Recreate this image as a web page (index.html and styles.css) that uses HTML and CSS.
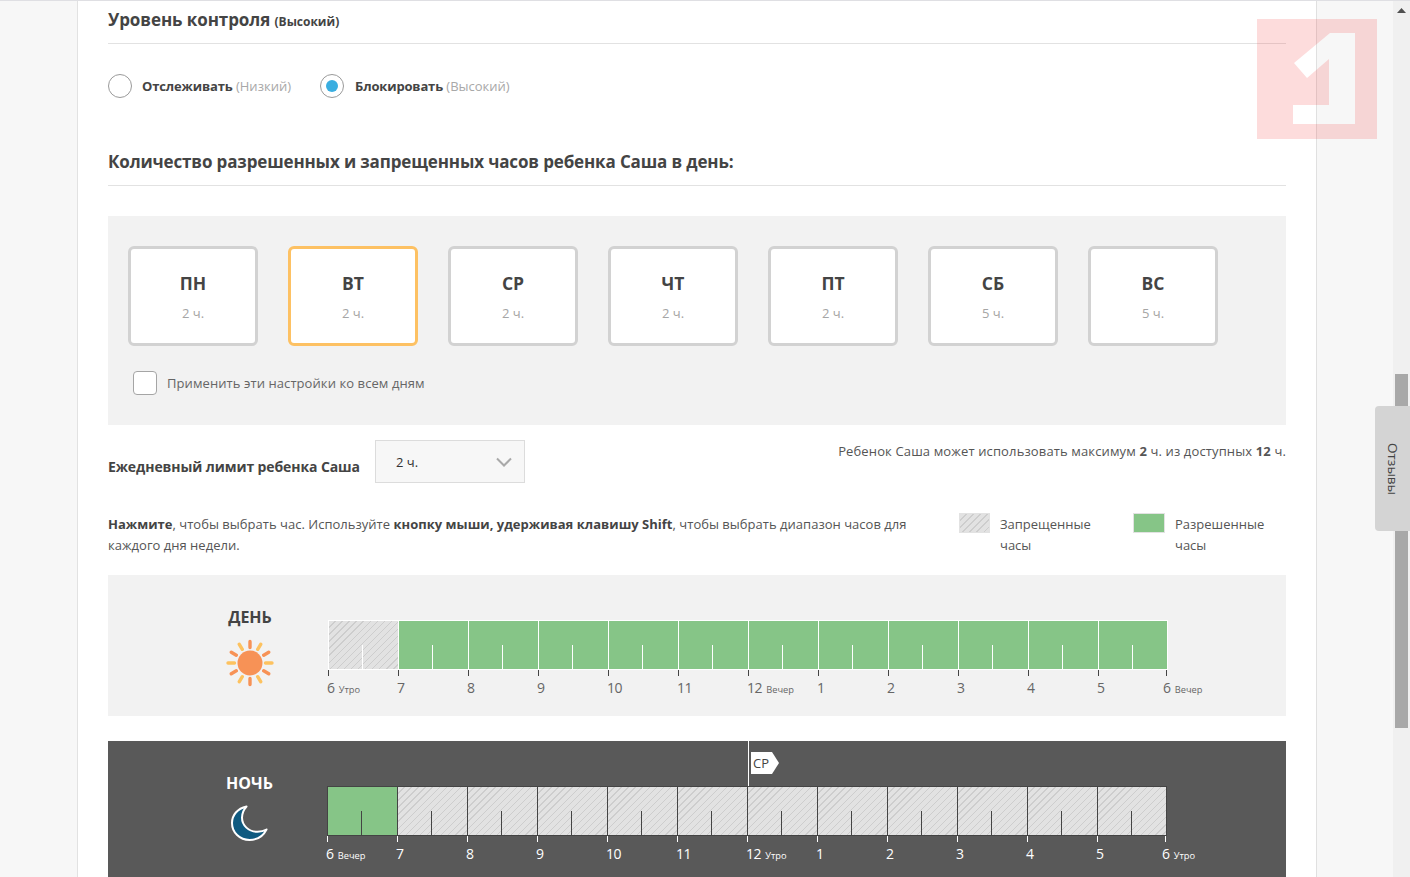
FILE: index.html
```html
<!DOCTYPE html>
<html lang="ru">
<head>
<meta charset="utf-8">
<title>Уровень контроля</title>
<link rel="stylesheet" href="styles.css">
</head>
<body>
<div class="page">
  <div class="gutter-left"></div>
  <main class="main">
    <h2 class="title title-first">Уровень контроля <small>(Высокий)</small></h2>
    <div class="radios">
      <label class="radio"><span class="radio-dot"></span><span><b>Отслеживать</b> <i>(Низкий)</i></span></label>
      <label class="radio"><span class="radio-dot on"></span><span><b>Блокировать</b> <i>(Высокий)</i></span></label>
    </div>
    <h2 class="title title-second">Количество разрешенных и запрещенных часов ребенка Саша в день:</h2>

    <section class="days-panel">
      <div class="days">
        <div class="day"><strong>ПН</strong><span>2 ч.</span></div>
        <div class="day active"><strong>ВТ</strong><span>2 ч.</span></div>
        <div class="day"><strong>СР</strong><span>2 ч.</span></div>
        <div class="day"><strong>ЧТ</strong><span>2 ч.</span></div>
        <div class="day"><strong>ПТ</strong><span>2 ч.</span></div>
        <div class="day"><strong>СБ</strong><span>5 ч.</span></div>
        <div class="day"><strong>ВС</strong><span>5 ч.</span></div>
      </div>
      <label class="apply"><span class="check"></span>Применить эти настройки ко всем дням</label>
    </section>

    <div class="limit">
      <b class="limit-label">Ежедневный лимит ребенка Саша</b>
      <div class="select">2 ч.
        <svg class="chev" width="16" height="10" viewBox="0 0 16 10"><path d="M1 1.5l7 7 7-7" fill="none" stroke="#a9a9a9" stroke-width="2"/></svg>
      </div>
      <p class="limit-note">Ребенок Саша может использовать максимум <b>2</b> ч. из доступных <b>12</b> ч.</p>
    </div>

    <div class="help">
      <p class="help-text"><b>Нажмите</b>, чтобы выбрать час. Используйте <b>кнопку мыши, удерживая клавишу Shift</b>, чтобы выбрать диапазон часов для каждого дня недели.</p>
      <div class="legend legend-a"><span class="swatch hatch"></span><span class="legend-text">Запрещенные часы</span></div>
      <div class="legend legend-b"><span class="swatch green"></span><span class="legend-text">Разрешенные часы</span></div>
    </div>

    <section class="sched sched-day">
      <div class="sched-side">
        <div class="sched-name">ДЕНЬ</div>
        <svg class="sun" width="48" height="48" viewBox="0 0 48 48">
          <circle cx="24" cy="24" r="12.5" fill="#f79256"/>
          <g stroke-width="3.4" stroke-linecap="round" fill="none">
            <path d="M24 2.500v6M24 39.500v6M5.300 13.200l5 3M37.700 31.800l5 3M42.700 13.200l-5 3M10.300 31.800l-5 3" stroke="#f79256"/>
            <path d="M13.300 5.300l3 5M31.700 37.700l3 5M34.700 5.300l-3 5M16.300 37.700l-3 5M2 24h6.500M39.500 24H46" stroke="#fdc25f"/>
          </g>
        </svg>
      </div>
      <div class="timeline">
        <div class="bar">
          <div class="cell off"></div><div class="cell on"></div><div class="cell on"></div><div class="cell on"></div><div class="cell on"></div><div class="cell on"></div><div class="cell on"></div><div class="cell on"></div><div class="cell on"></div><div class="cell on"></div><div class="cell on"></div><div class="cell on"></div>
        </div>
        <div class="hours">
          <div class="hour">6 <small>Утро</small></div><div class="hour">7</div><div class="hour">8</div><div class="hour">9</div><div class="hour">10</div><div class="hour">11</div><div class="hour">12 <small>Вечер</small></div><div class="hour">1</div><div class="hour">2</div><div class="hour">3</div><div class="hour">4</div><div class="hour">5</div><div class="hour last">6 <small>Вечер</small></div>
        </div>
      </div>
    </section>

    <section class="sched sched-night">
      <div class="sched-side">
        <div class="sched-name">НОЧЬ</div>
        <svg class="moon" width="40" height="38" viewBox="0 0 40 38">
          <path d="M16.500 2.500C7.500 4.500 2 11 2 19c0 9.500 7.700 17 17.500 17 7.500 0 13.500-3.500 17-10.500-3 1.800-6 2.300-9 2.300-9 0-15.500-6.500-15.500-14 0-4.300 1.500-8 4.500-11.300z" fill="#0f5a80" stroke="#fff" stroke-width="2" stroke-linejoin="round"/>
        </svg>
      </div>
      <div class="timeline">
        <div class="marker"><span class="flag">СР</span></div>
        <div class="bar">
          <div class="cell on"></div><div class="cell off"></div><div class="cell off"></div><div class="cell off"></div><div class="cell off"></div><div class="cell off"></div><div class="cell off"></div><div class="cell off"></div><div class="cell off"></div><div class="cell off"></div><div class="cell off"></div><div class="cell off"></div>
        </div>
        <div class="hours">
          <div class="hour">6 <small>Вечер</small></div><div class="hour">7</div><div class="hour">8</div><div class="hour">9</div><div class="hour">10</div><div class="hour">11</div><div class="hour">12 <small>Утро</small></div><div class="hour">1</div><div class="hour">2</div><div class="hour">3</div><div class="hour">4</div><div class="hour">5</div><div class="hour last">6 <small>Утро</small></div>
        </div>
      </div>
    </section>
  </main>
  <div class="gutter-right"></div>
  <div class="scrollbar">
    <svg class="scroll-up" width="9" height="5" viewBox="0 0 9 5"><path d="M4.500 0L9 5H0z" fill="#505050"/></svg>
    <div class="thumb"></div>
  </div>

  <svg class="watermark" width="120" height="120" viewBox="0 0 120 120">
    <path fill-rule="evenodd" d="M0 0h120v120H0zM73 14h25v91H36V86h36V40L50 59 37 44z" fill="#f53c3c" fill-opacity=".18"/>
  </svg>
  <div class="feedback"><span>Отзывы</span></div>
</div>
</body>
</html>
```
FILE: styles.css
```css
* { box-sizing: border-box; }
html, body { margin: 0; padding: 0; height: 100%; overflow: hidden; }
body { font-family: "Open Sans", "Noto Sans", sans-serif; color: #444; font-size: 13px; background: #f7f7f7; }
p, h2 { margin: 0; }
b, strong { font-weight: 700; }

.page { position: relative; display: flex; width: 1410px; height: 877px; overflow: hidden; border-top: 1px solid #dfdfe3; }
.gutter-left { width: 78px; background: #f7f7f7; border-right: 1px solid #e2e2e2; }
.gutter-right { width: 76px; background: #f7f7f7; }
.main { width: 1239px; padding: 0 30px; background: #fff; border-right: 1px solid #e0e0e0; flex: none; }

.title { font-size: 17px; line-height: 24px; font-weight: 700; color: #444; border-bottom: 1px solid #e2e2e2; }
.title small { font-size: 12px; font-weight: 700; letter-spacing: 0; }
.title-first { padding-top: 7px; padding-bottom: 11px; height: 43px; letter-spacing: -.08px; }
.title-second { margin-top: 52px; padding-bottom: 11px; letter-spacing: -.14px; }

.radios { display: flex; gap: 29px; margin-top: 30px; height: 24px; }
.radio { display: flex; align-items: center; gap: 10px; font-size: 13px; }
.radio b { letter-spacing: -.15px; }
.radio i { font-style: normal; color: #a8a8a8; }
.radio-dot { width: 24px; height: 24px; border-radius: 50%; border: 1px solid #9a9a9a; background: #fff; position: relative; }
.radio-dot.on { margin-right: 1px; }
.radio-dot.on::after { content: ""; position: absolute; left: 5px; top: 5px; width: 12px; height: 12px; border-radius: 50%; background: #3aaee0; }

.days-panel { margin-top: 30px; height: 209px; padding: 30px 20px 0; background: #f2f2f2; }
.days { display: flex; gap: 30px; }
.day { width: 130px; height: 100px; border: 3px solid #d2d2d2; border-radius: 6px; background: #fff; display: flex; flex-direction: column; align-items: center; padding-top: 21px; }
.day.active { border-color: #fdc163; }
.day strong { font-size: 17.5px; line-height: 26px; font-weight: 700; color: #444; }
.day span { font-size: 13px; line-height: 18px; margin-top: 8px; color: #a5a5a5; }
.apply { display: flex; align-items: center; gap: 10px; margin: 25px 0 0 5px; font-size: 13px; color: #666; letter-spacing: .08px; }
.check { width: 24px; height: 24px; border: 1px solid #a5a5a5; border-radius: 4px; background: #fff; }

.limit { display: flex; align-items: flex-start; height: 43px; margin-top: 15px; }
.limit-label { width: 267px; flex: none; font-size: 14px; line-height: 20px; margin-top: 17px; color: #444; letter-spacing: -.1px; }
.select { position: relative; width: 150px; height: 43px; border: 1px solid #dcdcdc; background: #f7f7f7; padding: 12px 20px; line-height: 18px; font-size: 13px; color: #333; }
.chev { position: absolute; right: 12px; top: 16px; }
.limit-note { margin-left: auto; line-height: 20px; margin-top: 1px; color: #555; letter-spacing: .13px; }

.help { display: flex; margin-top: 31px; height: 61px; line-height: 21px; color: #555; }
.help-text { width: 810px; letter-spacing: .02px; }
.help-text b { color: #444; }
.legend { display: flex; }
.legend-a { width: 174px; margin-left: 41px; }
.legend-b { flex: 1; }
.swatch { width: 31px; height: 20px; margin: -1px 10px 0 0; flex: none; border: 1px solid #e2e2e2; }
.swatch.green { width: 32px; background: #86c587; }
.legend-text { width: 100px; color: #555; }

.hatch, .cell.off { background: repeating-linear-gradient(135deg, #e2e2e2 0 4px, #cdcdcd 4px 5px); }

.sched { display: flex; }
.sched-side { width: 219px; display: flex; flex-direction: column; align-items: center; padding-left: 64px; flex: none; }
.sched-name { font-size: 16px; line-height: 22px; font-weight: 700; }
.sched-day { height: 141px; background: #f2f2f2; padding-top: 31px; }
.sched-day .sched-side { width: 220px; }
.sun { margin-top: 11px; }
.sched-night { height: 150px; margin-top: 25px; background: #595959; color: #fff; padding-top: 31px; position: relative; }
.moon { margin-top: 10px; }

.timeline { position: relative; padding-top: 14px; }
.bar { display: flex; width: 840px; height: 50px; border: 1px solid #fff; }
.sched-night .bar { border-color: #444; }
.cell { position: relative; width: 70px; border-right: 1px solid #fff; flex: none; }
.sched-night .cell { border-right-color: #444; }
.cell:last-child { border-right: 0; width: 68px; }
.cell.on { background: #86c587; }
.cell::after { content: ""; position: absolute; left: 33px; bottom: 0; width: 1px; height: 24px; background: #fff; }
.sched-night .cell::after { background: #444; }

.hours { display: flex; width: 910px; }
.hour { position: relative; width: 70px; flex: none; padding-top: 8px; font-size: 14px; letter-spacing: -.5px; line-height: 20px; color: #666; text-indent: -1px; }
.sched-night .hour { color: #fff; }
.hour::before { content: ""; position: absolute; left: 0; top: 0; width: 1px; height: 6px; background: #444; }
.sched-night .hour::before { background: #fff; }
.hour small { font-size: 9.3px; letter-spacing: 0; margin-left: 1px; }
.hour:nth-last-child(2) { width: 68px; }
.hour.last { width: auto; white-space: nowrap; text-indent: -3px; }

.marker { position: absolute; left: 421px; top: -31px; width: 1px; height: 45px; background: #fff; }
.flag { position: absolute; left: 3px; top: 11px; width: 28px; height: 22px; padding-left: 2px; font-size: 13px; line-height: 22px; color: #444; background: #fff; clip-path: polygon(0 0, 21px 0, 28px 50%, 21px 100%, 0 100%); }

.scrollbar { width: 17px; background: #f0f0f0; flex: none; position: relative; padding-top: 373px; }
.scroll-up { position: absolute; left: 4px; top: 7px; }
.thumb { width: 13px; height: 354px; margin-left: 2px; background: #a8a8a8; }

.watermark { position: absolute; left: 1257px; top: 18px; pointer-events: none; }
.feedback { position: absolute; left: 1375px; top: 405px; width: 35px; height: 125px; background: #d4d4d4; border-radius: 4px 0 0 4px; display: flex; align-items: center; justify-content: center; }
.feedback span { writing-mode: vertical-rl; font-size: 13.5px; color: #444; }
```
